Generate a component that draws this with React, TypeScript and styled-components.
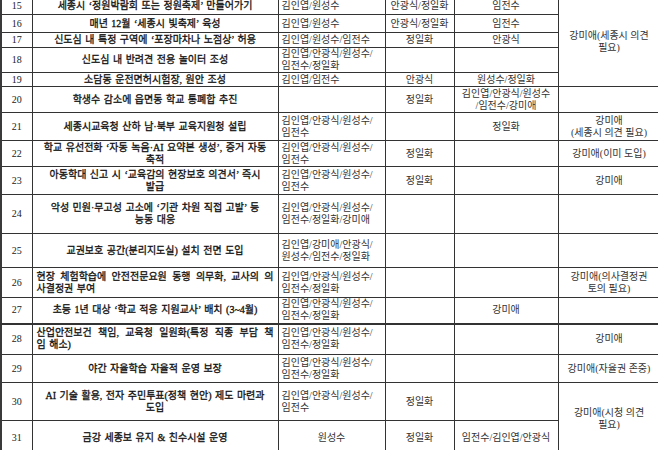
import styled, { createGlobalStyle } from "styled-components";

const GlobalStyle = createGlobalStyle`
  html, body {
    margin: 0;
    padding: 0;
    background: #fff;
    overflow: hidden;
  }
  body {
    font-family: "Liberation Serif", "Noto Sans CJK KR", serif;
    color: #1c1c1c;
  }
`;

type Align = "left" | "center" | "justify";

interface Cell {
  lines: string[];
  align?: Align;
  span?: number;
}

interface Row {
  no: number;
  height: number;
  policy: string[];
  policyAlign?: Align;
  thickBottom?: boolean;
  cells: (Cell | null)[];
}

const c = (text: string | string[], align: Align = "center", span?: number): Cell => ({
  lines: Array.isArray(text) ? text : text ? [text] : [],
  align,
  span,
});
const L = (text: string | string[]) => c(text, "left");
const E = c("");

const full = ["김인엽/안광식/원성수/", "임전수/정일화"];
const four = ["김인엽/안광식/원성수/", "임전수"];

// heights follow the row lines of the scanned table
const rows: Row[] = [
  {
    no: 15,
    height: 17,
    policy: ["세종시 ‘정원박람회 또는 정원축제’ 만들어가기"],
    cells: [L("김인엽/원성수"), c("안광식/정일화"), c("임전수"), c(["강미애(세종시 의견", "필요)"], "center", 5)],
  },
  {
    no: 16,
    height: 18,
    policy: ["매년 12월 ‘세종시 빛축제’ 육성"],
    cells: [L("김인엽/원성수"), c("안광식/정일화"), c("임전수"), null],
  },
  {
    no: 17,
    height: 15,
    policy: ["신도심 내 특정 구역에 ‘포장마차나 노점상’ 허용"],
    cells: [L("김인엽/원성수/임전수"), c("정일화"), c("안광식"), null],
  },
  {
    no: 18,
    height: 25,
    policy: ["신도심 내 반려견 전용 놀이터 조성"],
    cells: [L(full), E, E, null],
  },
  {
    no: 19,
    height: 14,
    policy: ["소담동 운전면허시험장, 원안 조성"],
    cells: [L("김인엽/임전수"), c("안광식"), c("원성수/정일화"), null],
  },
  {
    no: 20,
    height: 26,
    policy: ["학생수 감소에 읍면동 학교 통폐합 추진"],
    cells: [E, c("정일화"), c(["김인엽/안광식/원성수", "/임전수/강미애"]), E],
  },
  {
    no: 21,
    height: 28,
    policy: ["세종시교육청 산하 남·북부 교육지원청 설립"],
    cells: [L(four), E, c("정일화"), c(["강미애", "(세종시 의견 필요)"])],
  },
  {
    no: 22,
    height: 26,
    policy: ["학교 유선전화 ‘자동 녹음·AI 요약본 생성’, 증거 자동", "축적"],
    cells: [L(four), c("정일화"), E, c("강미애(이미 도입)")],
  },
  {
    no: 23,
    height: 28,
    policy: ["아동학대 신고 시 ‘교육감의 현장보호 의견서’ 즉시", "발급"],
    cells: [L(four), c("정일화"), E, c("강미애")],
  },
  {
    no: 24,
    height: 39,
    policy: ["악성 민원·무고성 고소에 ‘기관 차원 직접 고발’ 등", "능동 대응"],
    cells: [L(["김인엽/안광식/원성수/", "임전수/정일화/강미애"]), E, E, E],
  },
  {
    no: 25,
    height: 34,
    policy: ["교권보호 공간(분리지도실) 설치 전면 도입"],
    cells: [L(["김인엽/강미애/안광식/", "원성수/임전수/정일화"]), E, E, E],
  },
  {
    no: 26,
    height: 30,
    policy: ["현장 체험학습에 안전전문요원 동행 의무화, 교사의 의", "사결정권 부여"],
    policyAlign: "justify",
    cells: [L(full), E, E, c(["강미애(의사결정권", "토의 필요)"])],
  },
  {
    no: 27,
    height: 26,
    thickBottom: true,
    policy: ["초등 1년 대상 ‘학교 적응 지원교사’ 배치 (3~4월)"],
    cells: [L(full), E, c("강미애"), E],
  },
  {
    no: 28,
    height: 31,
    policy: ["산업안전보건 책임, 교육청 일원화(특정 직종 부담 책", "임 해소)"],
    policyAlign: "justify",
    cells: [L(full), E, E, c("강미애")],
  },
  {
    no: 29,
    height: 28,
    policy: ["야간 자율학습 자율적 운영 보장"],
    cells: [L(full), E, E, c("강미애(자율권 존중)")],
  },
  {
    no: 30,
    height: 38,
    policy: ["AI 기술 활용, 전자 주민투표(정책 현안) 제도 마련과", "도입"],
    cells: [L(four), c("정일화"), E, c(["강미애(시청 의견", "필요)"], "center", 2)],
  },
  {
    no: 31,
    height: 34,
    policy: ["금강 세종보 유지 & 친수시설 운영"],
    cells: [c("원성수"), c("정일화"), c("임전수/김인엽/안광식"), null],
  },
];

const colWidths = [31, 246, 107, 69, 104, 102];

function CellText({ lines, align }: { lines: string[]; align: Align }) {
  return (
    <>
      {lines.map((line, i) => (
        <Line key={i} $justify={align === "justify" && i < lines.length - 1}>
          {line}
        </Line>
      ))}
    </>
  );
}

export default function App() {
  return (
    <Page>
      <GlobalStyle />
      <Table>
        <colgroup>
          {colWidths.map((w, i) => (
            <col key={i} style={{ width: w }} />
          ))}
        </colgroup>
        <tbody>
          {rows.map((row) => (
            <TableRow key={row.no} $thick={!!row.thickBottom} style={{ height: row.height }}>
              <NumCell>{row.no}</NumCell>
              <PolicyCell $align={row.policyAlign ?? "center"}>
                <CellText lines={row.policy} align={row.policyAlign ?? "center"} />
              </PolicyCell>
              {row.cells.map((cell, i) =>
                cell ? (
                  <NameCell key={i} rowSpan={cell.span} $align={cell.align ?? "center"}>
                    <CellText lines={cell.lines} align={cell.align ?? "center"} />
                  </NameCell>
                ) : null
              )}
            </TableRow>
          ))}
        </tbody>
      </Table>
    </Page>
  );
}

const Page = styled.div`
  width: 658px;
  height: 450px;
  overflow: hidden;
  background: #fff;
`;

const Table = styled.table`
  margin-top: -3px;
  width: 659px;
  table-layout: fixed;
  border-collapse: collapse;
  border-left: 2px solid #3a3a3a;
  font-size: 10px;
  line-height: 12px;

  td {
    border: 1px solid #333;
    padding: 0 4px;
    vertical-align: middle;
    overflow: hidden;
  }
`;

const TableRow = styled.tr<{ $thick: boolean }>`
  td {
    border-bottom-width: ${(p) => (p.$thick ? "2px" : "1px")};
  }
`;

const NumCell = styled.td`
  text-align: center;
  padding: 0 !important;
  color: #222;
`;

const PolicyCell = styled.td<{ $align: Align }>`
  text-align: ${(p) => (p.$align === "center" ? "center" : "left")};
  color: #111;
  word-spacing: 1px;
  -webkit-text-stroke: 0.3px #111;
`;

const NameCell = styled.td<{ $align: Align }>`
  text-align: ${(p) => p.$align};
  color: #333;
  padding: 0 3px !important;
`;

const Line = styled.div<{ $justify: boolean }>`
  white-space: nowrap;
  text-align: ${(p) => (p.$justify ? "justify" : "inherit")};
  text-align-last: ${(p) => (p.$justify ? "justify" : "auto")};
`;
